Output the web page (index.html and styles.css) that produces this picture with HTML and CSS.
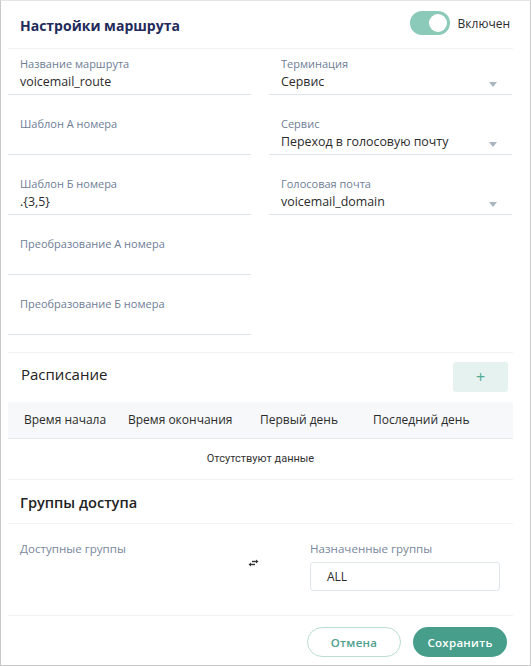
FILE: index.html
```html
<!DOCTYPE html>
<html lang="ru">
<head>
    <meta charset="UTF-8">
    <meta name="viewport" content="width=device-width, initial-scale=1.0">
    <title>Настройки маршрута</title>
    <link rel="stylesheet" href="styles.css">
</head>
<body>
    <div class="dialog">
        <div class="dialog-header">
            <h1>Настройки маршрута</h1>
            <label class="switch">
                <span class="switch-track"><span class="switch-knob"></span></span>
                <span class="switch-text">Включен</span>
            </label>
        </div>

        <div class="dialog-body">
            <div class="form-grid">
                <div class="form-col">
                    <div class="field">
                        <div class="field-label">Название маршрута</div>
                        <div class="field-value">voicemail_route</div>
                    </div>
                    <div class="field">
                        <div class="field-label">Шаблон А номера</div>
                        <div class="field-value"></div>
                    </div>
                    <div class="field">
                        <div class="field-label">Шаблон Б номера</div>
                        <div class="field-value">.{3,5}</div>
                    </div>
                    <div class="field">
                        <div class="field-label">Преобразование А номера</div>
                        <div class="field-value"></div>
                    </div>
                    <div class="field">
                        <div class="field-label">Преобразование Б номера</div>
                        <div class="field-value"></div>
                    </div>
                </div>
                <div class="form-col">
                    <div class="field select">
                        <div class="field-label">Терминация</div>
                        <div class="field-value">Сервис</div>
                    </div>
                    <div class="field select">
                        <div class="field-label">Сервис</div>
                        <div class="field-value">Переход в голосовую почту</div>
                    </div>
                    <div class="field select">
                        <div class="field-label">Голосовая почта</div>
                        <div class="field-value">voicemail_domain</div>
                    </div>
                </div>
            </div>

            <div class="section">
                <div class="section-head">
                    <h2>Расписание</h2>
                    <button class="add-btn">+</button>
                </div>
                <div class="table">
                    <div class="table-head">
                        <div>Время начала</div>
                        <div>Время окончания</div>
                        <div>Первый день</div>
                        <div>Последний день</div>
                    </div>
                    <div class="table-empty">Отсутствуют данные</div>
                </div>
            </div>

            <div class="groups">
                <h3>Группы доступа</h3>
                <div class="groups-body">
                    <div class="groups-col">
                        <div class="groups-label">Доступные группы</div>
                    </div>
                    <div class="swap">
                        <svg width="11" height="8" viewBox="0 0 11 8">
                            <path d="M4 2.5h5" stroke="#333" stroke-width="1.4"/>
                            <path d="M8 0.5l2.5 2-2.5 2z" fill="#333"/>
                            <path d="M2 5.5h5" stroke="#333" stroke-width="1.4"/>
                            <path d="M3 3.5l-2.5 2 2.5 2z" fill="#333"/>
                        </svg>
                    </div>
                    <div class="groups-col right">
                        <div class="groups-label">Назначенные группы</div>
                        <div class="groups-box">ALL</div>
                    </div>
                </div>
            </div>
        </div>

        <div class="dialog-footer">
            <button class="btn btn-outline">Отмена</button>
            <button class="btn btn-primary">Сохранить</button>
        </div>
    </div>
</body>
</html>
```

FILE: styles.css
```css
/* Global Styles */
* {
    margin: 0;
    padding: 0;
    box-sizing: border-box;
}

body {
    font-family: "Open Sans", Arial, sans-serif;
    background-color: #ffffff;
    color: #2b2b2b;
    width: 531px;
    height: 666px;
    overflow: hidden;
}

.dialog {
    width: 531px;
    height: 666px;
    border: 1px solid #c9c9c9;
    border-top-color: #e6e6e6;
    background: white;
    display: flex;
    flex-direction: column;
}

/* Header */
.dialog-header {
    height: 49px;
    display: flex;
    justify-content: space-between;
    align-items: center;
    margin: 0 17px 0 7px;
    padding-left: 12px;
    border-bottom: 1px solid #f1f3f5;
}

.dialog-header h1 {
    font-size: 14px;
    font-weight: 700;
    color: #1f2b5b;
    padding-top: 2px;
}

.switch {
    display: flex;
    align-items: center;
    gap: 8px;
    margin-right: 3px;
    margin-bottom: 2px;
}

.switch-track {
    width: 40px;
    height: 24px;
    border-radius: 12px;
    background-color: #8bc9b8;
    display: flex;
    align-items: center;
    justify-content: flex-end;
    padding: 0 3px;
}

.switch-knob {
    width: 18px;
    height: 18px;
    border-radius: 50%;
    background: white;
}

.switch-text {
    font-size: 12px;
    color: #2b2b2b;
}

/* Body */
.dialog-body {
    flex: 1;
    margin: 0 17px 0 7px;
}

.form-grid {
    display: grid;
    grid-template-columns: 243px 243px;
    column-gap: 18px;
    padding: 7px 0 17px;
    border-bottom: 1px solid #f1f3f5;
}

.form-col {
    display: flex;
    flex-direction: column;
    gap: 21px;
}

.field {
    border-bottom: 1px solid #dde3ea;
    padding: 0 0 2px 12px;
    position: relative;
}

.field-label {
    font-size: 11px;
    line-height: 16px;
    color: #6e7d96;
}

.field-value {
    font-size: 12.4px;
    line-height: 20px;
    height: 20px;
    color: #2b2b2b;
}

.field.select::after {
    content: "";
    position: absolute;
    right: 15px;
    top: 26px;
    border-left: 4px solid transparent;
    border-right: 4px solid transparent;
    border-top: 5px solid #aab5c2;
}

/* Schedule */
.section-head {
    display: flex;
    justify-content: space-between;
    align-items: center;
    padding: 9px 5px 10px 13px;
}

.section-head h2 {
    font-size: 15px;
    font-weight: 500;
    color: #222;
    margin-bottom: 5px;
}

.add-btn {
    width: 55px;
    height: 30px;
    border: none;
    border-radius: 3px;
    background-color: #e5f2ef;
    color: #52a892;
    font-size: 16px;
    font-family: inherit;
}

.table-head {
    display: grid;
    grid-template-columns: 104px 132px 113px 1fr;
    background-color: #f6f8fa;
    border-bottom: 1px solid #e6eaee;
    height: 37px;
    align-items: center;
    font-size: 12px;
    color: #2b2b2b;
}

.table-head div {
    padding-left: 16px;
}

.table-empty {
    height: 41px;
    display: flex;
    align-items: center;
    justify-content: center;
    font-family: Roboto, Arial, sans-serif;
    font-size: 11px;
    color: #333;
    border-bottom: 1px solid #f1f3f5;
}

/* Groups */
.groups h3 {
    font-size: 14.6px;
    font-weight: 600;
    color: #222;
    padding: 12px 0 0 12px;
    height: 44px;
    border-bottom: 1px solid #f1f3f5;
}

.groups-body {
    display: flex;
    padding: 17px 0 0 12px;
    height: 92px;
    border-bottom: 1px solid #f1f3f5;
}

.groups-col {
    width: 228px;
}

.groups-col.right {
    width: 190px;
    margin-left: 51px;
}

.groups-label {
    font-size: 11.6px;
    line-height: 16px;
    color: #7a879c;
}

.swap {
    padding-top: 18px;
    display: flex;
}

.groups-box {
    margin-top: 5px;
    height: 29px;
    border: 1px solid #e1e6ec;
    border-radius: 3px;
    padding-left: 16px;
    display: flex;
    align-items: center;
    font-size: 12px;
    color: #2b2b2b;
}

/* Footer */
.dialog-footer {
    display: flex;
    justify-content: flex-end;
    gap: 12px;
    padding: 4px 23px 0 0;
    height: 50px;
    align-items: center;
}

.btn {
    width: 94px;
    height: 30px;
    border-radius: 15px;
    font-family: inherit;
    font-size: 11.5px;
    font-weight: 600;
    letter-spacing: 0.3px;
    cursor: pointer;
}

.btn-outline {
    background: white;
    border: 1px solid #b9ddd4;
    color: #4ea08c;
}

.btn-primary {
    background-color: #479f8b;
    border: none;
    color: white;
}
```
